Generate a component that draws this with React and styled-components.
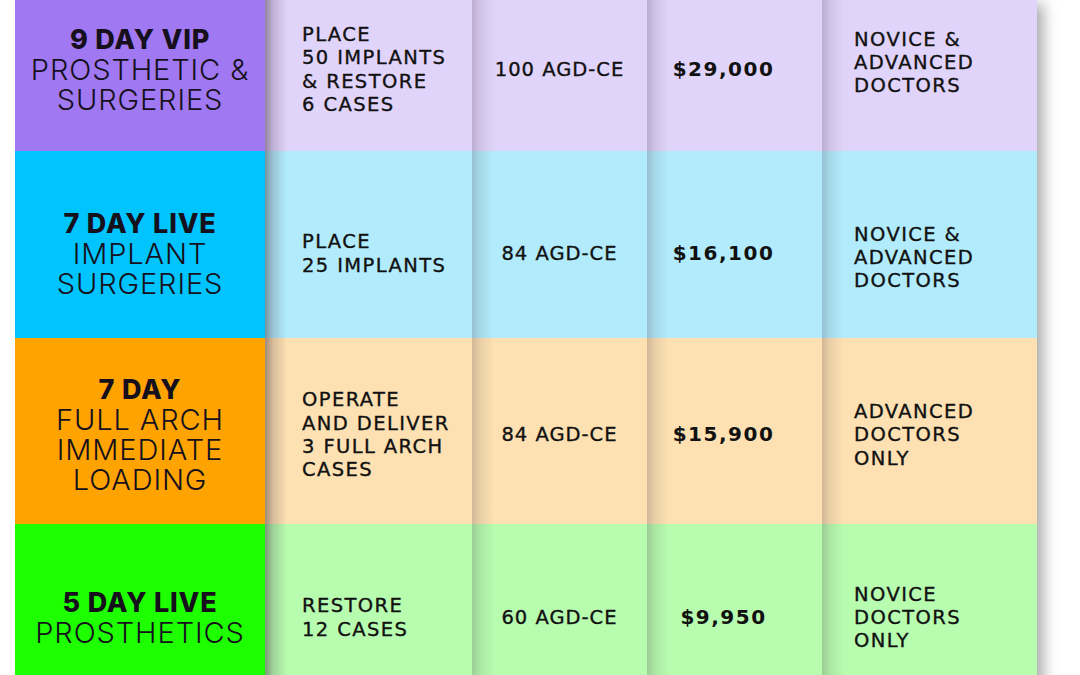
import React from 'react';
import styled, {createGlobalStyle} from 'styled-components';

const GlobalStyle = createGlobalStyle`
  html, body {
    margin: 0;
    padding: 0;
    background: #fff;
    height: 675px;
    overflow: hidden;
  }
`;

const Page = styled.div`
  padding-left: 15px;
  width: 1080px;
  height: 675px;
  overflow: hidden;
  box-sizing: border-box;
`;

const Table = styled.div`
  width: 1022px;
  box-shadow: 10px 0 14px -4px rgba(0, 0, 0, 0.35);
`;

const Row = styled.div`
  display: grid;
  grid-template-columns: 250px 207px 175px 175px 215px;
  height: ${({$height}) => $height}px;
`;

const Cell = styled.div`
  display: flex;
  align-items: center;
  box-sizing: border-box;
  padding-top: ${({$pt}) => $pt || 0}px;
  padding-bottom: ${({$pb}) => $pb || 0}px;
`;

const HeadCell = styled(Cell)`
  justify-content: center;
  background: ${({$color}) => $color};
  text-align: center;
  color: #15101c;
`;

const DataCell = styled(Cell)`
  background:
    linear-gradient(to right,
      rgba(40, 20, 40, ${({$deep}) => ($deep ? 0.42 : 0.2)}) 0px,
      rgba(40, 20, 40, ${({$deep}) => ($deep ? 0.18 : 0.09)}) 8px,
      rgba(40, 20, 40, 0) 22px),
    ${({$color}) => $color};
  justify-content: ${({$center}) => ($center ? 'center' : 'flex-start')};
  padding-left: ${({$pl}) => $pl || 0}px;
  padding-right: ${({$pr}) => $pr || 0}px;
  text-align: ${({$center}) => ($center ? 'center' : 'left')};
`;

const Title = styled.div`
  font-family: Inter, "Liberation Sans", sans-serif;
  line-height: 30px;
`;

const Strong = styled.div`
  font-weight: 800;
  font-size: 27px;
  letter-spacing: 0.8px;
`;

const Light = styled.div`
  font-weight: 300;
  font-size: 29px;
  letter-spacing: 0.9px;
`;

const Text = styled.div`
  font-family: "DejaVu Sans", "Liberation Sans", sans-serif;
  font-size: ${({$bold}) => ($bold ? 20 : 19.5)}px;
  line-height: 23.3px;
  letter-spacing: ${({$ls}) => ($ls === undefined ? 1.4 : $ls)}px;
  font-weight: ${({$bold}) => ($bold ? 700 : 400)};
  -webkit-text-stroke: ${({$bold}) => ($bold ? 0 : 0.35)}px #111;
  color: #111;
  white-space: nowrap;
`;

const rows = [
  {
    height: 151, pb: 12,
    strong: '#a078f1', light: '#e1d4fa',
    title: '9 DAY VIP', sub: ['PROSTHETIC &', 'SURGERIES'],
    goal: ['PLACE', '50 IMPLANTS', '& RESTORE', '6 CASES'],
    ce: '100 AGD-CE', price: '$29,000',
    who: ['NOVICE &', 'ADVANCED', 'DOCTORS'], whoShift: -14,
  },
  {
    height: 187, pt: 18,
    strong: '#00c4fe', light: '#b2ecfc',
    title: '7 DAY LIVE', sub: ['IMPLANT', 'SURGERIES'],
    goal: ['PLACE', '25 IMPLANTS'],
    ce: '84 AGD-CE', price: '$16,100',
    who: ['NOVICE &', 'ADVANCED', 'DOCTORS'], whoShift: 8,
  },
  {
    height: 186, pt: 8,
    strong: '#ffa300', light: '#fde1b3',
    title: '7 DAY', sub: ['FULL ARCH', 'IMMEDIATE', 'LOADING'],
    goal: ['OPERATE', 'AND DELIVER', '3 FULL ARCH', 'CASES'],
    ce: '84 AGD-CE', price: '$15,900',
    who: ['ADVANCED', 'DOCTORS', 'ONLY'], whoShift: 0,
  },
  {
    height: 187, pt: 0,
    strong: '#1eff00', light: '#b8fcb0',
    title: '5 DAY LIVE', sub: ['PROSTHETICS'],
    goal: ['RESTORE', '12 CASES'],
    ce: '60 AGD-CE', price: '$9,950',
    who: ['NOVICE', 'DOCTORS', 'ONLY'], whoShift: 0,
  },
];

const Lines = ({items, ...rest}) => (
  <Text {...rest}>
    {items.map((line, i) => <div key={i}>{line}</div>)}
  </Text>
);

export default function App() {
  return (
    <Page>
      <GlobalStyle/>
      <Table>
        {rows.map((r, index) => (
          <Row key={index} $height={r.height}>
            <HeadCell $color={r.strong} $pt={r.pt} $pb={r.pb}>
              <Title>
                <Strong>{r.title}</Strong>
                {r.sub.map((s, i) => <Light key={i}>{s}</Light>)}
              </Title>
            </HeadCell>
            <DataCell $deep $color={r.light} $pt={r.pt} $pb={r.pb} $pl={37}>
              <Lines items={r.goal}/>
            </DataCell>
            <DataCell $center $color={r.light} $pt={r.pt} $pb={r.pb}>
              <Text $ls={1.0}>{r.ce}</Text>
            </DataCell>
            <DataCell $center $color={r.light} $pt={r.pt} $pb={r.pb} $pr={22}>
              <Text $bold $ls={1.5}>{r.price}</Text>
            </DataCell>
            <DataCell
              $color={r.light}
              $pt={(r.pt || 0) + Math.max(r.whoShift, 0)}
              $pb={(r.pb || 0) - Math.min(r.whoShift, 0)}
              $pl={32}
            >
              <Lines items={r.who}/>
            </DataCell>
          </Row>
        ))}
      </Table>
    </Page>
  );
}
